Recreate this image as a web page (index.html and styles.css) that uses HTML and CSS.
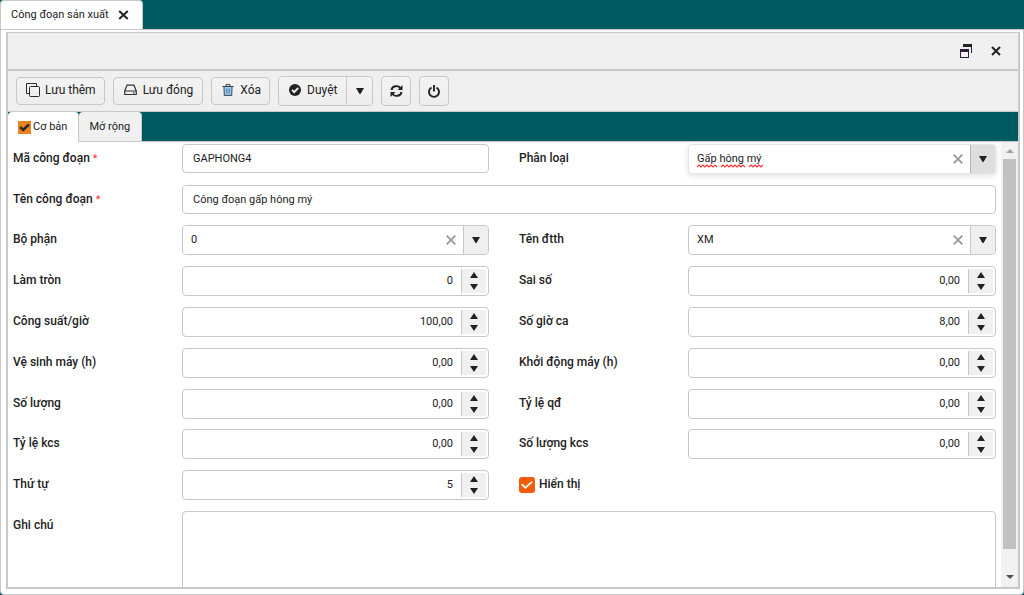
FILE: index.html
```html
<!DOCTYPE html>
<html lang="vi">
<head>
<meta charset="utf-8">
<title>Công đoạn sản xuất</title>
<link rel="stylesheet" href="styles.css">
</head>
<body>
<div class="tabs" role="tablist">
  <div class="page-tab" role="tab" aria-selected="true">Công đoạn sản xuất
    <button class="plain" aria-label="Đóng tab"><svg width="11" height="10" viewBox="0 0 11 10"><path d="M1.2 1l8.6 8M9.8 1L1.2 9" stroke="#222" stroke-width="2"/></svg></button>
  </div>
</div>
<main class="panel">
  <section class="window">
    <header class="titlebar">
      <button class="plain" aria-label="Khôi phục"><svg width="12" height="14" viewBox="0 0 12 14"><path d="M3 0h9v9h-1V3H3z" fill="#222"/><path d="M0 5h9v9H0zM1 8v5h7V8z" fill="#321b3d" fill-rule="evenodd"/></svg></button>
      <button class="plain" aria-label="Đóng"><svg width="10" height="10" viewBox="0 0 10 10"><path d="M1 1l8 8M9 1L1 9" stroke="#222" stroke-width="2"/></svg></button>
    </header>
    <div class="toolbar">
      <button class="btn"><svg width="14" height="14" viewBox="0 0 14 14" fill="none" stroke="#2b2b2b"><path d="M3 10.500H.5V.5h10V3"/><rect x="3.500" y="3.500" width="10" height="10" rx="1"/></svg>Lưu thêm</button>
      <button class="btn drive"><svg width="13" height="12" viewBox="0 0 13 12" fill="none" stroke="#333" stroke-width="1.200"><path d="M.7 7L3 1.200h7L12.300 7v3.500H.7zM.7 7h11.600M9 8.800h1.500"/></svg>Lưu đóng</button>
      <button class="btn trash"><svg width="12" height="12" viewBox="0 0 12 12" fill="none"><path d="M2.500 3h7v8h-7z" fill="#9ccbf0"/><path d="M4.500 4.500v5M6 4.500v5M7.500 4.500v5" stroke="#4f86b5" stroke-width=".8"/><path d="M.5 2.500h11M4 2V.6h4V2M2 3l.3 8.400h7.400L10 3" stroke="#32424f"/></svg>Xóa</button>
      <div class="split">
        <button class="split-main"><svg width="12" height="12" viewBox="0 0 12 12"><circle cx="6" cy="6" r="6" fill="#222"/><path d="M3 5.800l2.200 2.300L9.200 4" fill="none" stroke="#f1f1f1" stroke-width="1.800"/></svg>Duyệt</button>
        <button class="split-arrow" aria-label="Mở danh sách duyệt"><svg width="8" height="6" viewBox="0 0 8 6"><path d="M0 0h8L4.500 6h-1z" fill="#222"/></svg></button>
      </div>
      <button class="btn square" aria-label="Làm mới"><svg width="13" height="12" viewBox="0 0 13 12"><path d="M1.500 5A5 4.500 0 0 1 10.500 3M11.500 7A5 4.500 0 0 1 2.500 9" fill="none" stroke="#222" stroke-width="1.900"/><path d="M12.500 0v5h-5zM.5 12V7h5z" fill="#222"/></svg></button>
      <button class="btn square" aria-label="Thoát"><svg width="12" height="13" viewBox="0 0 12 13"><path d="M3.500 2.500a5 5 0 1 0 5 0M6 0v6.500" fill="none" stroke="#222" stroke-width="1.900"/></svg></button>
    </div>
    <div class="tabs inner" role="tablist">
      <button class="tab active" role="tab" aria-selected="true"><svg width="13" height="13" viewBox="0 0 13 13"><path fill="#ea8220" d="M0 0h13v13H0z"/><path d="M2.200 6l3 3 5.800-5.600" fill="none" stroke="#2a2a2a" stroke-width="2.600"/></svg>Cơ bản</button>
      <button class="tab" role="tab">Mở rộng</button>
    </div>
    <div class="body">
      <form class="form">
        <label for="ma">Mã công đoạn <i>*</i></label>
        <div class="field short"><input id="ma" value="GAPHONG4"></div>
        <label class="second" for="phanloai">Phân loại</label>
        <div class="field combo focus"><input id="phanloai" role="combobox" value="Gấp hông mý" spellcheck="false"><svg class="squiggle" width="66" height="4" viewBox="0 0 66 4"><path d="M0 3l2-2 2 2 2-2 2 2 2-2 2 2 2-2 2 2 2-2 2 2M24 3l2-2 2 2 2-2 2 2 2-2 2 2 2-2 2 2 2-2 2 2 2-2 2 2M52 3l2-2 2 2 2-2 2 2 2-2 2 2 2-2" fill="none" stroke="#f33" stroke-width="1.200"/></svg><button type="button" class="clear" aria-label="Xóa giá trị"><svg width="10" height="10" viewBox="0 0 10 10"><path d="M.7.7l8.600 8.600M9.300.7L.7 9.300" stroke="#999" stroke-width="1.800"/></svg></button><button type="button" class="drop" aria-label="Mở danh sách"><svg width="8" height="6" viewBox="0 0 8 6"><path d="M0 0h8L4.500 6h-1z" fill="#222"/></svg></button></div>

        <label for="ten">Tên công đoạn <i>*</i></label>
        <div class="field short wide"><input id="ten" value="Công đoạn gấp hông mý"></div>

        <label for="bophan">Bộ phận</label>
        <div class="field combo"><input id="bophan" role="combobox" value="0"><button type="button" class="clear" aria-label="Xóa giá trị"><svg width="10" height="10" viewBox="0 0 10 10"><path d="M.7.7l8.600 8.600M9.300.7L.7 9.300" stroke="#999" stroke-width="1.800"/></svg></button><button type="button" class="drop" aria-label="Mở danh sách"><svg width="8" height="6" viewBox="0 0 8 6"><path d="M0 0h8L4.500 6h-1z" fill="#222"/></svg></button></div>
        <label class="second" for="dtth">Tên đtth</label>
        <div class="field combo"><input id="dtth" role="combobox" value="XM"><button type="button" class="clear" aria-label="Xóa giá trị"><svg width="10" height="10" viewBox="0 0 10 10"><path d="M.7.7l8.600 8.600M9.300.7L.7 9.300" stroke="#999" stroke-width="1.800"/></svg></button><button type="button" class="drop" aria-label="Mở danh sách"><svg width="8" height="6" viewBox="0 0 8 6"><path d="M0 0h8L4.500 6h-1z" fill="#222"/></svg></button></div>

        <label for="lamtron">Làm tròn</label>
        <div class="field number"><input id="lamtron" value="0"><span class="spin"><button type="button" class="up" aria-label="Tăng"></button><button type="button" class="down" aria-label="Giảm"></button></span></div>
        <label class="second" for="saiso">Sai số</label>
        <div class="field number"><input id="saiso" value="0,00"><span class="spin"><button type="button" class="up" aria-label="Tăng"></button><button type="button" class="down" aria-label="Giảm"></button></span></div>

        <label for="congsuat">Công suất/giờ</label>
        <div class="field number"><input id="congsuat" value="100,00"><span class="spin"><button type="button" class="up" aria-label="Tăng"></button><button type="button" class="down" aria-label="Giảm"></button></span></div>
        <label class="second" for="sogio">Số giờ ca</label>
        <div class="field number"><input id="sogio" value="8,00"><span class="spin"><button type="button" class="up" aria-label="Tăng"></button><button type="button" class="down" aria-label="Giảm"></button></span></div>

        <label for="vesinh">Vệ sinh máy (h)</label>
        <div class="field number"><input id="vesinh" value="0,00"><span class="spin"><button type="button" class="up" aria-label="Tăng"></button><button type="button" class="down" aria-label="Giảm"></button></span></div>
        <label class="second" for="khoidong">Khởi động máy (h)</label>
        <div class="field number"><input id="khoidong" value="0,00"><span class="spin"><button type="button" class="up" aria-label="Tăng"></button><button type="button" class="down" aria-label="Giảm"></button></span></div>

        <label for="soluong">Số lượng</label>
        <div class="field number"><input id="soluong" value="0,00"><span class="spin"><button type="button" class="up" aria-label="Tăng"></button><button type="button" class="down" aria-label="Giảm"></button></span></div>
        <label class="second" for="tyleqd">Tỷ lệ qđ</label>
        <div class="field number"><input id="tyleqd" value="0,00"><span class="spin"><button type="button" class="up" aria-label="Tăng"></button><button type="button" class="down" aria-label="Giảm"></button></span></div>

        <label for="tylekcs">Tỷ lệ kcs</label>
        <div class="field number"><input id="tylekcs" value="0,00"><span class="spin"><button type="button" class="up" aria-label="Tăng"></button><button type="button" class="down" aria-label="Giảm"></button></span></div>
        <label class="second" for="slkcs">Số lượng kcs</label>
        <div class="field number"><input id="slkcs" value="0,00"><span class="spin"><button type="button" class="up" aria-label="Tăng"></button><button type="button" class="down" aria-label="Giảm"></button></span></div>

        <label for="thutu">Thứ tự</label>
        <div class="field number"><input id="thutu" value="5"><span class="spin"><button type="button" class="up" aria-label="Tăng"></button><button type="button" class="down" aria-label="Giảm"></button></span></div>
        <div class="check second"><input type="checkbox" id="hienthi" checked><label for="hienthi">Hiển thị</label></div>

        <label class="row-start" for="ghichu">Ghi chú</label>
        <textarea id="ghichu" class="wide"></textarea>
      </form>
      <div class="scrollbar" aria-hidden="true">
        <svg width="8" height="4" viewBox="0 0 8 4"><path d="M0 4h8L4 0z" fill="#a3a3a3"/></svg>
        <div class="rail"><div class="thumb"></div></div>
        <svg width="8" height="4" viewBox="0 0 8 4"><path d="M0 0h8L4 4z" fill="#505050"/></svg>
      </div>
    </div>
  </section>
</main>
</body>
</html>
```
FILE: styles.css
```css
* { box-sizing: border-box; }
body {
  margin: 0;
  height: 100vh;
  display: flex;
  flex-direction: column;
  overflow: hidden;
  background: #005b60;
  color: #222;
  font: 11px/16px Roboto, "Liberation Sans", sans-serif;
}
button, input, textarea { font: inherit; color: inherit; margin: 0; padding: 0; }
button { display: flex; align-items: center; justify-content: center; border: 0; background: none; }
svg { display: block; flex: none; }

.tabs { flex: none; display: flex; height: 29px; }
.page-tab {
  display: flex;
  align-items: center;
  gap: 9px;
  padding: 0 13px 0 10px;
  background: #fff;
  border: 1px solid #c8c8c8;
  border-bottom: 0;
  border-radius: 4px 4px 0 0;
}
.panel {
  flex: 1;
  min-height: 0;
  display: flex;
  padding: 2px 3px 5px 5px;
  background: #fff;
  border: 1px solid #c8c8c8;
  border-radius: 0 0 4px 4px;
}
.window {
  flex: 1;
  min-width: 0;
  display: flex;
  flex-direction: column;
  border: 2px solid #c8c8c8;
  border-top-width: 1px;
}
.titlebar {
  flex: none;
  display: flex;
  align-items: center;
  justify-content: flex-end;
  gap: 19px;
  height: 38px;
  padding-right: 17px;
  background: #f0f0f0;
  border-bottom: 2px solid #c8c8c8;
}
.toolbar {
  flex: none;
  display: flex;
  align-items: center;
  gap: 8px;
  height: 41px;
  padding-left: 8px;
  background: #efefef;
  border-bottom: 1px solid #c8c8c8;
  font-size: 12px;
}
.btn, .split {
  height: 28px;
  border: 1px solid #c8c8c8;
  border-radius: 4px;
  background: linear-gradient(#f3f3f3, #ededed);
}
.btn { gap: 5px; padding: 0 8px 0 9px; }
.btn, .split-main { padding-bottom: 2px; }
.drive { padding-left: 10px; padding-right: 9px; gap: 6px; }
.trash { padding-left: 10px; gap: 6px; }
.split { display: flex; height: 30px; }
.split-main { gap: 6px; padding: 0 9px 2px 10px; }
.split-arrow { width: 26px; border-left: 1px solid #c8c8c8; }
.square { width: 30px; height: 30px; padding: 0; }

.inner { background: #005b60; border-bottom: 1px solid #c8c8c8; height: 30px; }
.tab {
  padding: 0 11px 0 10px;
  background: #f0f0f0;
  border-right: 1px solid #c8c8c8;
  border-radius: 4px 4px 0 0;
}
.tab.active { gap: 2px; height: 30px; background: #fff; }

.body { flex: 1; min-height: 0; display: flex; overflow: hidden; background: #fff; }
.form {
  flex: 1;
  display: grid;
  grid-template-columns: 169px 307fr 199px 308fr;
  grid-auto-rows: 30px;
  grid-template-rows: 30px 29px 30px 30px 30px 30px 29px;
  row-gap: 11px;
  padding: 2px 5px 0;
}
.form label { font-size: 12px; font-weight: 500; padding-top: 6px; }
.form i { color: #f33; font-size: 11px; font-style: normal; font-weight: 400; }
.form .second { padding-left: 30px; }
.wide { grid-column: 2 / 5; }
.field {
  position: relative;
  display: flex;
  height: 30px;
  min-width: 0;
  border: 1px solid #c8c8c8;
  border-radius: 4px;
  background: #fff;
}
.short { height: 29px; }
.field input {
  flex: 1;
  min-width: 0;
  padding-left: 8px;
  border: 0;
  outline: 0;
  background: none;
}
.short input { padding-left: 10px; }
.focus { border-color: #e4e4e4; box-shadow: 0 2px 6px rgba(0, 0, 0, .12); }
.clear { width: 24px; }
.drop { width: 25px; background: #efefef; border-left: 1px solid #c8c8c8; border-radius: 0 3px 3px 0; }
.focus .drop { background: #dedede; border-color: #b4b4b4; }
.squiggle { position: absolute; left: 8px; bottom: 5px; }
.number input { text-align: right; padding-right: 6px; }
.spin {
  width: 25px;
  margin: 2px;
  display: flex;
  flex-direction: column;
  background: #f0f0f0;
  border-left: 1px solid #c8c8c8;
}
.spin button { flex: 1; }
.spin button::before { content: ""; border: 4px solid transparent; }
.spin .up::before { border-top: 0; border-bottom: 6px solid #222; }
.spin .down::before { border-bottom: 0; border-top: 6px solid #222; }
.check { display: flex; gap: 4px; grid-column: 3 / 5; }
.check input {
  appearance: none;
  width: 16px;
  height: 16px;
  margin-top: 7px;
  border-radius: 3px;
  background: #f75b07;
  display: flex;
  align-items: center;
  justify-content: center;
}
.check input::before {
  content: "";
  width: 12px;
  height: 8px;
  background: #fff;
  clip-path: polygon(0 48%, 11% 32%, 36% 68%, 89% 0, 100% 14%, 36% 100%);
}
.row-start { grid-column: 1; }
textarea { height: 90px; padding: 6px 10px; border: 1px solid #c8c8c8; border-radius: 4px; resize: none; outline: 0; }

.scrollbar {
  flex: none;
  width: 17px;
  display: flex;
  flex-direction: column;
  align-items: center;
  padding: 7px 2px 8px;
  background: #f1f1f1;
}
.rail { flex: 1; width: 13px; padding: 6px 0; }
.thumb { height: 95%; background: #c1c1c1; }
```
